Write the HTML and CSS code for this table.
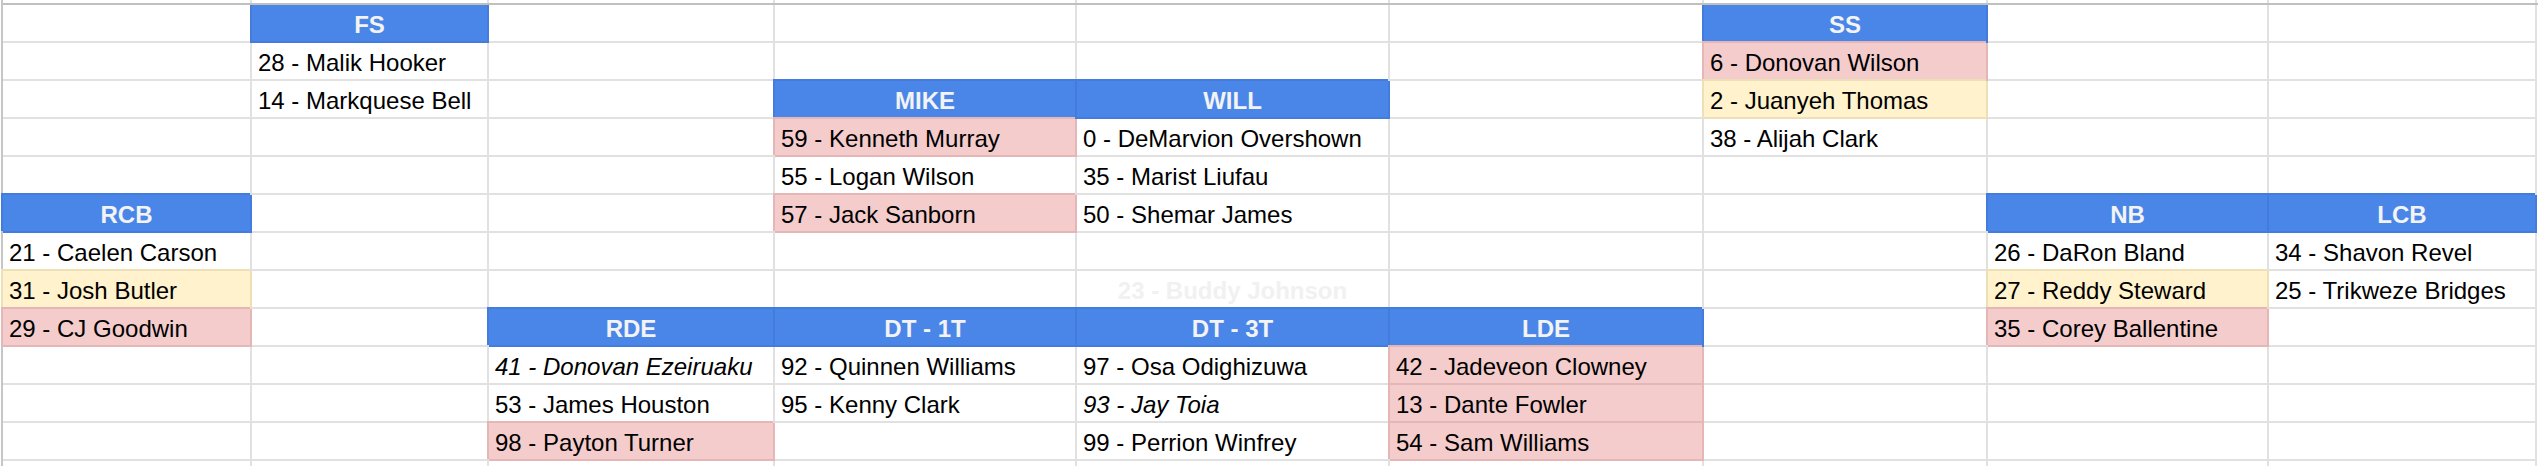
FILE: index.html
```html
<!DOCTYPE html>
<html>
<head>
<meta charset="utf-8">
<title>Depth Chart</title>
<link rel="stylesheet" href="styles.css">
</head>
<body>
<div class="sheet">
  <div class="row strip"><div class="cell"></div><div class="cell"></div><div class="cell"></div><div class="cell"></div><div class="cell"></div><div class="cell"></div><div class="cell"></div><div class="cell"></div><div class="cell"></div></div>

  <div class="row first">
    <div class="cell"></div><div class="cell h">FS</div><div class="cell"></div><div class="cell"></div><div class="cell"></div><div class="cell"></div><div class="cell h">SS</div><div class="cell"></div><div class="cell"></div>
  </div>
  <div class="row">
    <div class="cell"></div><div class="cell">28 - Malik Hooker</div><div class="cell"></div><div class="cell"></div><div class="cell"></div><div class="cell"></div><div class="cell red">6 - Donovan Wilson</div><div class="cell"></div><div class="cell"></div>
  </div>
  <div class="row">
    <div class="cell"></div><div class="cell">14 - Markquese Bell</div><div class="cell"></div><div class="cell h">MIKE</div><div class="cell h">WILL</div><div class="cell"></div><div class="cell yel">2 - Juanyeh Thomas</div><div class="cell"></div><div class="cell"></div>
  </div>
  <div class="row">
    <div class="cell"></div><div class="cell"></div><div class="cell"></div><div class="cell red">59 - Kenneth Murray</div><div class="cell">0 - DeMarvion Overshown</div><div class="cell"></div><div class="cell">38 - Alijah Clark</div><div class="cell"></div><div class="cell"></div>
  </div>
  <div class="row">
    <div class="cell"></div><div class="cell"></div><div class="cell"></div><div class="cell">55 - Logan Wilson</div><div class="cell">35 - Marist Liufau</div><div class="cell"></div><div class="cell"></div><div class="cell"></div><div class="cell"></div>
  </div>
  <div class="row">
    <div class="cell h">RCB</div><div class="cell"></div><div class="cell"></div><div class="cell red">57 - Jack Sanborn</div><div class="cell">50 - Shemar James</div><div class="cell"></div><div class="cell"></div><div class="cell h">NB</div><div class="cell h">LCB</div>
  </div>
  <div class="row">
    <div class="cell">21 - Caelen Carson</div><div class="cell"></div><div class="cell"></div><div class="cell"></div><div class="cell"></div><div class="cell"></div><div class="cell"></div><div class="cell">26 - DaRon Bland</div><div class="cell">34 - Shavon Revel</div>
  </div>
  <div class="row">
    <div class="cell yel">31 - Josh Butler</div><div class="cell"></div><div class="cell"></div><div class="cell"></div><div class="cell ghost">23 - Buddy Johnson</div><div class="cell"></div><div class="cell"></div><div class="cell yel">27 - Reddy Steward</div><div class="cell">25 - Trikweze Bridges</div>
  </div>
  <div class="row">
    <div class="cell red">29 - CJ Goodwin</div><div class="cell"></div><div class="cell h">RDE</div><div class="cell h">DT - 1T</div><div class="cell h">DT - 3T</div><div class="cell h">LDE</div><div class="cell"></div><div class="cell red">35 - Corey Ballentine</div><div class="cell"></div>
  </div>
  <div class="row">
    <div class="cell"></div><div class="cell"></div><div class="cell it">41 - Donovan Ezeiruaku</div><div class="cell">92 - Quinnen Williams</div><div class="cell">97 - Osa Odighizuwa</div><div class="cell red">42 - Jadeveon Clowney</div><div class="cell"></div><div class="cell"></div><div class="cell"></div>
  </div>
  <div class="row">
    <div class="cell"></div><div class="cell"></div><div class="cell">53 - James Houston</div><div class="cell">95 - Kenny Clark</div><div class="cell it">93 - Jay Toia</div><div class="cell red">13 - Dante Fowler</div><div class="cell"></div><div class="cell"></div><div class="cell"></div>
  </div>
  <div class="row">
    <div class="cell"></div><div class="cell"></div><div class="cell red">98 - Payton Turner</div><div class="cell"></div><div class="cell">99 - Perrion Winfrey</div><div class="cell red">54 - Sam Williams</div><div class="cell"></div><div class="cell"></div><div class="cell"></div>
  </div>

  <div class="row strip tail"><div class="cell"></div><div class="cell"></div><div class="cell"></div><div class="cell"></div><div class="cell"></div><div class="cell"></div><div class="cell"></div><div class="cell"></div><div class="cell"></div></div>
</div>
</body>
</html>
```

FILE: styles.css
```css
html, body {
  margin: 0;
  padding: 0;
  background: #ffffff;
  overflow: hidden;
}

body {
  font-family: "Liberation Sans", Arial, sans-serif;
  font-size: 24px;
  color: #000000;
}

.sheet {
  margin-left: 1px;
  width: 2537px;
  border-left: 2px solid #c6c6c6;
}

.row {
  display: grid;
  grid-template-columns: 249px 237px 286px 302px 313px 314px 284px 281px 268px;
}

.row.first {
  border-top: 2px solid #c0c0c0;
}

.cell {
  box-sizing: border-box;
  height: 38px;
  border-right: 2px solid #e1e1e1;
  border-bottom: 2px solid #e1e1e1;
  padding: 6px 6px 0 6px;
  line-height: 28px;
  white-space: nowrap;
  overflow: hidden;
}

.strip .cell {
  height: 3px;
  padding: 0;
  border-bottom: 0;
}

.tail .cell {
  height: 5px;
}

.h {
  background: #4a86e8;
  color: #f3f3f3;
  font-weight: bold;
  text-align: center;
  border-right-color: #437cdc;
  border-bottom-color: #437cdc;
  box-shadow: -2px -2px 0 0 #437cdc;
}

.first .h {
  box-shadow: -2px 0 0 0 #437cdc;
}

.red {
  background: #f4cccc;
  border-right-color: #e4b6b6;
  border-bottom-color: #e4b6b6;
  box-shadow: -2px -2px 0 0 #e4b6b6;
}

.yel {
  background: #fff2cc;
  border-right-color: #ede0b6;
  border-bottom-color: #ede0b6;
  box-shadow: -2px -2px 0 0 #ede0b6;
}

.it {
  font-style: italic;
}

.ghost {
  color: #f1f1f1;
  font-weight: bold;
  text-align: center;
}
```
